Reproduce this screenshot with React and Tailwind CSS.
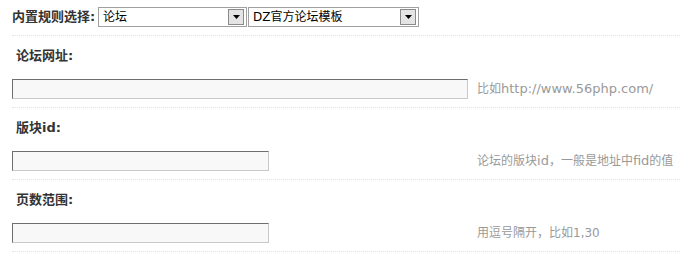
import React from "react";

const font = { fontFamily: '"DejaVu Sans", "Noto Sans CJK SC", sans-serif' };

const FakeSelect = ({ value, width }) => (
  <div
    className={`flex h-5 items-center justify-between border border-[#a0a0a0] bg-white pl-1 pr-[2px] ${width}`}
  >
    <span className="text-[12px] leading-none text-black">{value}</span>
    <span className="flex h-4 w-4 items-center justify-center border border-[#8a8a8a] bg-[#e4e4e4]">
      <svg width="7" height="4" viewBox="0 0 7 4">
        <path d="M0 0h7L3.5 4z" fill="#000" />
      </svg>
    </span>
  </div>
);

const Field = ({ label, hint, inputWidth }) => (
  <div className="border-b border-dotted border-[#e2e2e2] pt-[10px] pb-2">
    <div className="flex h-5 items-center pl-1 text-[13px] font-bold text-[#333]">{label}</div>
    <div className="mt-[13px] grid grid-cols-[465px_1fr] items-center">
      <div>
        <input
          type="text"
          className={`block h-5 border border-t-[#6e6e6e] border-l-[#6e6e6e] border-r-[#c8c8c8] border-b-[#c8c8c8] bg-[#f8f8f8] outline-none ${inputWidth}`}
        />
      </div>
      <div className="text-[12px] text-[#999]">{hint}</div>
    </div>
  </div>
);

// latin bits of the hints render a bit wider in the original
const L = ({ children }) => <span className="text-[13px]">{children}</span>;

export default function App() {
  return (
    <div className="w-[694px] h-[259px] bg-white" style={font}>
      <div className="ml-3 w-[668px]">
        <div className="flex h-[36px] items-center border-b border-dotted border-[#e2e2e2] pb-[2px]">
          <span className="w-[86px] text-[13px] font-bold text-[#333]">内置规则选择:</span>
          <FakeSelect value="论坛" width="w-[149px]" />
          <div className="w-[1px]" />
          <FakeSelect value="DZ官方论坛模板" width="w-[171px]" />
        </div>
        <Field
          label="论坛网址:"
          hint={<>比如<L>http://www.56php.com/</L></>}
          inputWidth="w-[456px]"
        />
        <Field
          label="版块id:"
          hint={<>论坛的版块<L>id</L>，一般是地址中<L>fid</L>的值</>}
          inputWidth="w-[257px]"
        />
        <Field label="页数范围:" hint="用逗号隔开，比如1,30" inputWidth="w-[257px]" />
      </div>
    </div>
  );
}
